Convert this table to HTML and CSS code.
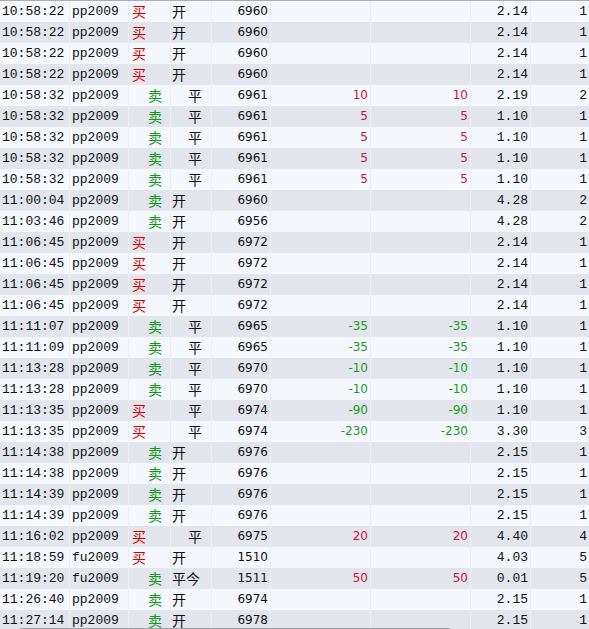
FILE: index.html
```html
<!DOCTYPE html>
<html lang="zh">
<head>
<meta charset="utf-8">
<title>成交记录</title>
<link rel="stylesheet" href="styles.css">
</head>
<body>
<div class="grid">
  <div class="topline"></div>
  <div class="rows">
    <div class="row"><span class="c t">10:58:22</span><span class="c k">pp2009</span><span class="c d"><i class="buy">买</i></span><span class="c o"><i>开</i></span><span class="c p">6960</span><span class="c m"></span><span class="c m"></span><span class="c f">2.14</span><span class="c q">1</span></div>
    <div class="row"><span class="c t">10:58:22</span><span class="c k">pp2009</span><span class="c d"><i class="buy">买</i></span><span class="c o"><i>开</i></span><span class="c p">6960</span><span class="c m"></span><span class="c m"></span><span class="c f">2.14</span><span class="c q">1</span></div>
    <div class="row"><span class="c t">10:58:22</span><span class="c k">pp2009</span><span class="c d"><i class="buy">买</i></span><span class="c o"><i>开</i></span><span class="c p">6960</span><span class="c m"></span><span class="c m"></span><span class="c f">2.14</span><span class="c q">1</span></div>
    <div class="row"><span class="c t">10:58:22</span><span class="c k">pp2009</span><span class="c d"><i class="buy">买</i></span><span class="c o"><i>开</i></span><span class="c p">6960</span><span class="c m"></span><span class="c m"></span><span class="c f">2.14</span><span class="c q">1</span></div>
    <div class="row"><span class="c t">10:58:32</span><span class="c k">pp2009</span><span class="c d"><i class="sell">卖</i></span><span class="c o"><i class="ind">平</i></span><span class="c p">6961</span><span class="c m pos">10</span><span class="c m pos">10</span><span class="c f">2.19</span><span class="c q">2</span></div>
    <div class="row"><span class="c t">10:58:32</span><span class="c k">pp2009</span><span class="c d"><i class="sell">卖</i></span><span class="c o"><i class="ind">平</i></span><span class="c p">6961</span><span class="c m pos">5</span><span class="c m pos">5</span><span class="c f">1.10</span><span class="c q">1</span></div>
    <div class="row"><span class="c t">10:58:32</span><span class="c k">pp2009</span><span class="c d"><i class="sell">卖</i></span><span class="c o"><i class="ind">平</i></span><span class="c p">6961</span><span class="c m pos">5</span><span class="c m pos">5</span><span class="c f">1.10</span><span class="c q">1</span></div>
    <div class="row"><span class="c t">10:58:32</span><span class="c k">pp2009</span><span class="c d"><i class="sell">卖</i></span><span class="c o"><i class="ind">平</i></span><span class="c p">6961</span><span class="c m pos">5</span><span class="c m pos">5</span><span class="c f">1.10</span><span class="c q">1</span></div>
    <div class="row"><span class="c t">10:58:32</span><span class="c k">pp2009</span><span class="c d"><i class="sell">卖</i></span><span class="c o"><i class="ind">平</i></span><span class="c p">6961</span><span class="c m pos">5</span><span class="c m pos">5</span><span class="c f">1.10</span><span class="c q">1</span></div>
    <div class="row"><span class="c t">11:00:04</span><span class="c k">pp2009</span><span class="c d"><i class="sell">卖</i></span><span class="c o"><i>开</i></span><span class="c p">6960</span><span class="c m"></span><span class="c m"></span><span class="c f">4.28</span><span class="c q">2</span></div>
    <div class="row"><span class="c t">11:03:46</span><span class="c k">pp2009</span><span class="c d"><i class="sell">卖</i></span><span class="c o"><i>开</i></span><span class="c p">6956</span><span class="c m"></span><span class="c m"></span><span class="c f">4.28</span><span class="c q">2</span></div>
    <div class="row"><span class="c t">11:06:45</span><span class="c k">pp2009</span><span class="c d"><i class="buy">买</i></span><span class="c o"><i>开</i></span><span class="c p">6972</span><span class="c m"></span><span class="c m"></span><span class="c f">2.14</span><span class="c q">1</span></div>
    <div class="row"><span class="c t">11:06:45</span><span class="c k">pp2009</span><span class="c d"><i class="buy">买</i></span><span class="c o"><i>开</i></span><span class="c p">6972</span><span class="c m"></span><span class="c m"></span><span class="c f">2.14</span><span class="c q">1</span></div>
    <div class="row"><span class="c t">11:06:45</span><span class="c k">pp2009</span><span class="c d"><i class="buy">买</i></span><span class="c o"><i>开</i></span><span class="c p">6972</span><span class="c m"></span><span class="c m"></span><span class="c f">2.14</span><span class="c q">1</span></div>
    <div class="row"><span class="c t">11:06:45</span><span class="c k">pp2009</span><span class="c d"><i class="buy">买</i></span><span class="c o"><i>开</i></span><span class="c p">6972</span><span class="c m"></span><span class="c m"></span><span class="c f">2.14</span><span class="c q">1</span></div>
    <div class="row"><span class="c t">11:11:07</span><span class="c k">pp2009</span><span class="c d"><i class="sell">卖</i></span><span class="c o"><i class="ind">平</i></span><span class="c p">6965</span><span class="c m neg">-35</span><span class="c m neg">-35</span><span class="c f">1.10</span><span class="c q">1</span></div>
    <div class="row"><span class="c t">11:11:09</span><span class="c k">pp2009</span><span class="c d"><i class="sell">卖</i></span><span class="c o"><i class="ind">平</i></span><span class="c p">6965</span><span class="c m neg">-35</span><span class="c m neg">-35</span><span class="c f">1.10</span><span class="c q">1</span></div>
    <div class="row"><span class="c t">11:13:28</span><span class="c k">pp2009</span><span class="c d"><i class="sell">卖</i></span><span class="c o"><i class="ind">平</i></span><span class="c p">6970</span><span class="c m neg">-10</span><span class="c m neg">-10</span><span class="c f">1.10</span><span class="c q">1</span></div>
    <div class="row"><span class="c t">11:13:28</span><span class="c k">pp2009</span><span class="c d"><i class="sell">卖</i></span><span class="c o"><i class="ind">平</i></span><span class="c p">6970</span><span class="c m neg">-10</span><span class="c m neg">-10</span><span class="c f">1.10</span><span class="c q">1</span></div>
    <div class="row"><span class="c t">11:13:35</span><span class="c k">pp2009</span><span class="c d"><i class="buy">买</i></span><span class="c o"><i class="ind">平</i></span><span class="c p">6974</span><span class="c m neg">-90</span><span class="c m neg">-90</span><span class="c f">1.10</span><span class="c q">1</span></div>
    <div class="row"><span class="c t">11:13:35</span><span class="c k">pp2009</span><span class="c d"><i class="buy">买</i></span><span class="c o"><i class="ind">平</i></span><span class="c p">6974</span><span class="c m neg">-230</span><span class="c m neg">-230</span><span class="c f">3.30</span><span class="c q">3</span></div>
    <div class="row"><span class="c t">11:14:38</span><span class="c k">pp2009</span><span class="c d"><i class="sell">卖</i></span><span class="c o"><i>开</i></span><span class="c p">6976</span><span class="c m"></span><span class="c m"></span><span class="c f">2.15</span><span class="c q">1</span></div>
    <div class="row"><span class="c t">11:14:38</span><span class="c k">pp2009</span><span class="c d"><i class="sell">卖</i></span><span class="c o"><i>开</i></span><span class="c p">6976</span><span class="c m"></span><span class="c m"></span><span class="c f">2.15</span><span class="c q">1</span></div>
    <div class="row"><span class="c t">11:14:39</span><span class="c k">pp2009</span><span class="c d"><i class="sell">卖</i></span><span class="c o"><i>开</i></span><span class="c p">6976</span><span class="c m"></span><span class="c m"></span><span class="c f">2.15</span><span class="c q">1</span></div>
    <div class="row"><span class="c t">11:14:39</span><span class="c k">pp2009</span><span class="c d"><i class="sell">卖</i></span><span class="c o"><i>开</i></span><span class="c p">6976</span><span class="c m"></span><span class="c m"></span><span class="c f">2.15</span><span class="c q">1</span></div>
    <div class="row"><span class="c t">11:16:02</span><span class="c k">pp2009</span><span class="c d"><i class="buy">买</i></span><span class="c o"><i class="ind">平</i></span><span class="c p">6975</span><span class="c m pos">20</span><span class="c m pos">20</span><span class="c f">4.40</span><span class="c q">4</span></div>
    <div class="row"><span class="c t">11:18:59</span><span class="c k">fu2009</span><span class="c d"><i class="buy">买</i></span><span class="c o"><i>开</i></span><span class="c p">1510</span><span class="c m"></span><span class="c m"></span><span class="c f">4.03</span><span class="c q">5</span></div>
    <div class="row"><span class="c t">11:19:20</span><span class="c k">fu2009</span><span class="c d"><i class="sell">卖</i></span><span class="c o"><i>平今</i></span><span class="c p">1511</span><span class="c m pos">50</span><span class="c m pos">50</span><span class="c f">0.01</span><span class="c q">5</span></div>
    <div class="row"><span class="c t">11:26:40</span><span class="c k">pp2009</span><span class="c d"><i class="sell">卖</i></span><span class="c o"><i>开</i></span><span class="c p">6974</span><span class="c m"></span><span class="c m"></span><span class="c f">2.15</span><span class="c q">1</span></div>
    <div class="row"><span class="c t">11:27:14</span><span class="c k">pp2009</span><span class="c d"><i class="sell">卖</i></span><span class="c o"><i>开</i></span><span class="c p">6978</span><span class="c m"></span><span class="c m"></span><span class="c f">2.15</span><span class="c q">1</span></div>
  </div>
  <div class="hscroll"></div>
</div>
</body>
</html>
```

FILE: styles.css
```css
html, body {
  margin: 0;
  padding: 0;
  background: #f4f7fc;
  overflow: hidden;
}
.grid {
  position: relative;
  width: 589px;
  height: 629px;
  overflow: hidden;
  font-family: "Liberation Mono", "Noto Sans CJK SC", monospace;
  font-size: 13px;
  color: #111;
}
.topline {
  height: 1px;
  background: #a9acb2;
}
.rows {
  display: flex;
  flex-direction: column;
}
.row {
  display: grid;
  grid-template-columns: 70px 59px 42px 41px 59px 100px 100px 60px 58px;
  height: 21px;
  background: #f4f7fc;
}
.row:nth-child(even) {
  background: #e2e5eb;
}
.c {
  box-sizing: border-box;
  border-right: 1px solid #ebeef3;
  line-height: 21px;
  white-space: nowrap;
  overflow: hidden;
}
.q { border-right: 0; }
.t { padding-left: 2px; }
.k { padding-left: 2px; }
.d { padding-left: 3px; }
.o { padding-left: 1px; }
.c i {
  font-style: normal;
  font-family: "Noto Sans CJK SC", sans-serif;
  font-size: 14px;
  display: inline-block;
  line-height: 21px;
}
.buy { color: #d40000; }
.sell { color: #15961a; margin-left: 16px; }
.ind { margin-left: 16px; }
.p, .m {
  text-align: right;
  padding-right: 2px;
  font-family: "DejaVu Sans", sans-serif;
  font-size: 12px;
}
.f, .q {
  text-align: right;
  padding-right: 2px;
}
.pos { color: #c8143c; }
.neg { color: #1f9a25; }
.hscroll {
  position: absolute;
  left: 20px;
  top: 628px;
  width: 430px;
  height: 1px;
  background: #9da0a6;
}
```
